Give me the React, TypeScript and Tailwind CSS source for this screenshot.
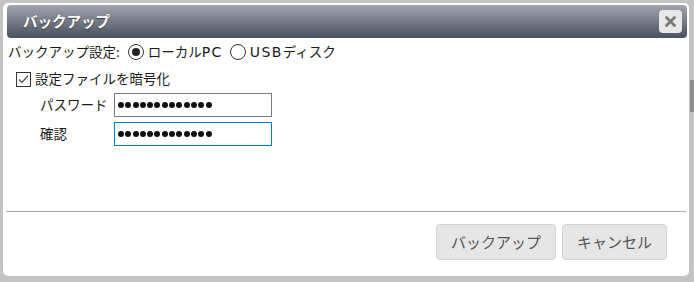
import React from "react";

const font = { fontFamily: '"Noto Sans CJK JP", "Noto Sans", sans-serif' };

function Dots({ n }: { n: number }) {
  return (
    <div className="flex items-center gap-[1.3px] pl-[3px]">
      {Array.from({ length: n }).map((_, i) => (
        <span key={i} className="block w-[6px] h-[6px] rounded-full bg-[#111]" />
      ))}
    </div>
  );
}

function Radio({ checked }: { checked?: boolean }) {
  return (
    <span className="w-[16px] h-[16px] rounded-full border border-[#333] bg-white flex items-center justify-center shrink-0">
      {checked && <span className="block w-[8px] h-[8px] rounded-full bg-[#222]" />}
    </span>
  );
}

function Latin({ children }: { children: React.ReactNode }) {
  return (
    <span className="font-['DejaVu_Sans'] text-[14px] tracking-[1.4px]">{children}</span>
  );
}

export default function App() {
  return (
    <div
      className="w-[694px] h-[282px] bg-[#c4c4c4] pt-[3px] pl-[3px] overflow-hidden relative"
      style={font}
    >
      <div className="absolute right-0 top-[80px] w-[4px] h-[32px] bg-[#8e8e8e]" />
      <div className="w-[686px] h-[273px] bg-white rounded-[5px] flex flex-col pt-[2px] pb-[16px] text-[13.5px] text-[#1a1a1a] relative">
        {/* title bar */}
        <div className="mx-[4px] mr-[2px] h-[33px] rounded-[4px] bg-gradient-to-b from-[#a3a6ad] to-[#4a5160] flex items-center justify-between pl-[16px] pr-[5px]">
          <span className="text-white font-bold text-[14.5px] [text-shadow:0_1px_1px_rgba(0,0,0,0.5)] leading-none">
            バックアップ
          </span>
          <span className="w-[23px] h-[23px] rounded-[4px] bg-[#e8e8e8] flex items-center justify-center">
            <svg width="11" height="11" viewBox="0 0 11 11">
              <path d="M1.5 1.5 L9.5 9.5 M9.5 1.5 L1.5 9.5" stroke="#7a7a7a" strokeWidth="2.8" strokeLinecap="round" />
            </svg>
          </span>
        </div>

        {/* row 1 */}
        <div className="mt-[4px] h-[20px] flex items-center pl-[5px] leading-none">
          <span>バックアップ設定:</span>
          <span className="ml-[8px]"><Radio checked /></span>
          <span className="ml-[4px]">ローカル<Latin>PC</Latin></span>
          <span className="ml-[7px]"><Radio /></span>
          <span className="ml-[4px]"><Latin>USB</Latin>ディスク</span>
        </div>

        {/* row 2 */}
        <div className="mt-[7px] h-[20px] flex items-center pl-[13px] leading-none">
          <span className="w-[15px] h-[15px] border border-[#333] bg-white flex items-center justify-center">
            <svg width="13" height="13" viewBox="0 0 13 13">
              <path d="M2 6.5 L5 9.5 L11 2.5" fill="none" stroke="#555" strokeWidth="1.2" />
            </svg>
          </span>
          <span className="ml-[4px]">設定ファイルを暗号化</span>
        </div>

        {/* password */}
        <div className="mt-[4px] flex items-center pl-[37px]">
          <span className="w-[74px] leading-none">パスワード</span>
          <div className="w-[158px] h-[24px] border border-[#7a7a7a] flex items-center">
            <Dots n={13} />
          </div>
        </div>
        <div className="mt-[5px] flex items-center pl-[37px]">
          <span className="w-[74px] leading-none">確認</span>
          <div className="w-[158px] h-[24px] border border-[#0078d7] flex items-center">
            <Dots n={13} />
          </div>
        </div>

        <div className="mt-auto mx-[3px] h-px bg-[#a8a8a8]" />

        <div className="mt-[12px] flex justify-end gap-[6px] pr-[22px]">
          <button className="w-[120px] h-[36px] rounded-[4px] bg-[#e6e6e6] border border-[#d2d2d2] text-[15px] text-[#555]">
            バックアップ
          </button>
          <button className="w-[105px] h-[36px] rounded-[4px] bg-[#e6e6e6] border border-[#d2d2d2] text-[15px] text-[#555]">
            キャンセル
          </button>
        </div>
      </div>
    </div>
  );
}
